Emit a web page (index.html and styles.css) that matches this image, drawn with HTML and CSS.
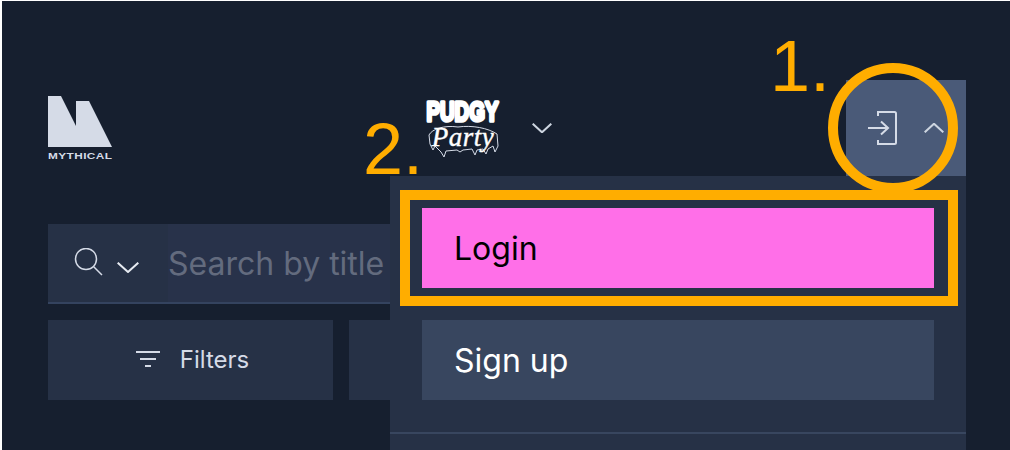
FILE: index.html
```html
<!DOCTYPE html>
<html lang="en">
<head>
    <meta charset="UTF-8">
    <meta name="viewport" content="width=device-width, initial-scale=1.0">
    <title>Mythical</title>
    <link rel="stylesheet" href="styles.css">
</head>
<body>
    <div class="page">
        <header class="header">
            <div class="logo">
                <svg width="64" height="51" viewBox="0 0 64 51"><path d="M0 0H13L28 30V5H41L64 51H0Z" fill="#d5dbe7"/></svg>
                <span class="logo-name">MYTHICAL</span>
            </div>
            <div class="game-picker">
                <svg class="pudgy" width="80" height="62" viewBox="0 0 80 62">
                    <text x="42.500" y="24" class="pudgy-title" text-anchor="middle" textLength="72" lengthAdjust="spacingAndGlyphs">PUDGY</text>
                    <path d="M9 38C12 32 24 28 38 30C52 28 68 31 77 37L78 49L75 55L73 49L68 52L66 57L63 52L57 53L55 58L52 52L43 53L40 55L37 53L26 54L24 60L21 55L15 49L13 53L10 47Z" class="pudgy-drip"/>
                    <text x="43" y="49" class="pudgy-sub" text-anchor="middle">Party</text>
                </svg>
                <svg class="chevron" width="20" height="10" viewBox="0 0 20 10"><path d="M.7 .7L10 9.300L19.300 .7" fill="none" stroke="#cdd5e0" stroke-width="2"/></svg>
            </div>
            <div class="account">
                <button class="account-btn">
                    <svg width="30" height="34" viewBox="0 0 30 34" fill="none" stroke="#d5dbe7" stroke-width="2"><path d="M10 5V1H26.500Q28 1 28 2.500V31.500Q28 33 26.500 33H10V29"/><path d="M0 17H20M13 10.500L20 17L13 23.500"/></svg>
                    <svg width="20" height="10" viewBox="0 0 20 10"><path d="M.7 9.300L10 .7L19.300 9.300" fill="none" stroke="#cdd5e0" stroke-width="2"/></svg>
                </button>
                <div class="account-menu">
                    <a class="menu-item menu-item-active">Login</a>
                    <a class="menu-item">Sign up</a>
                    <div class="menu-divider"></div>
                </div>
            </div>
        </header>

        <div class="search">
            <div class="search-type">
                <svg width="30" height="30" viewBox="0 0 30 30" fill="none" stroke="#d5dbe7" stroke-width="1.500"><circle cx="12" cy="11" r="10.500"/><path d="M19.500 18.500L28 27"/></svg>
                <svg width="22" height="11" viewBox="0 0 22 11"><path d="M.7 .7L11 10L21.300 .7" fill="none" stroke="#e6eaf1" stroke-width="2"/></svg>
            </div>
            <span class="search-text">Search by title</span>
        </div>

        <div class="toolbar">
            <button class="tool-btn">
                <svg width="24" height="16" viewBox="0 0 24 16" fill="none" stroke="#d5dbe7" stroke-width="2"><path d="M0 1H24M4 8H20M9 15H15"/></svg>
                Filters
            </button>
            <button class="tool-btn"></button>
        </div>
    </div>

    <!-- annotations on top of the screenshot -->
    <span class="note note-one">1.</span>
    <span class="note note-two">2.</span>
    <div class="ring"></div>
    <div class="frame"></div>
</body>
</html>
```

FILE: styles.css
```css
* {
    box-sizing: border-box;
    font-family: Inter, "Liberation Sans", sans-serif;
}

html, body {
    margin: 0;
    height: 100%;
}

body {
    position: relative;
    width: 1010px;
    height: 450px;
    overflow: hidden;
    background-color: #161f2f;
}

/* white edge of the screenshot */
body::after {
    content: "";
    position: absolute;
    top: 0;
    left: 0;
    width: 100%;
    height: 100%;
    border: solid #fff;
    border-width: 1px 2px 0;
}

.page {
    padding: 80px 44px 0 48px;
}

.header {
    display: flex;
    align-items: center;
    height: 96px;
}

.logo {
    display: flex;
    flex-direction: column;
    width: 64px;
    height: 64px;
}

.logo-name {
    margin-top: 6px;
    font-family: "Liberation Sans", sans-serif;
    font-size: 8.500px;
    font-weight: 700;
    line-height: 7px;
    letter-spacing: .3px;
    color: #d5dbe7;
    white-space: nowrap;
    transform: scaleX(1.39);
    transform-origin: left;
}

.game-picker {
    display: flex;
    align-items: center;
    margin-left: 308px;
}

.pudgy {
    overflow: visible;
}

.chevron {
    margin-left: 32px;
    margin-top: -1px;
}

.pudgy-title {
    font-family: "Liberation Sans", sans-serif;
    font-size: 28px;
    font-weight: 700;
    fill: #fff;
    stroke: #fff;
    stroke-width: 3.500px;
    stroke-linejoin: round;
}

.pudgy-sub {
    font-family: "Liberation Serif", serif;
    font-size: 27px;
    font-style: italic;
    letter-spacing: .5px;
    fill: #fff;
    stroke: #fff;
    stroke-width: .4px;
}

.pudgy-drip {
    fill: #161f2f;
    stroke: #d5dbe7;
    stroke-width: 1px;
}

.account {
    position: relative;
    margin-left: auto;
}

.account-btn {
    display: flex;
    align-items: center;
    justify-content: center;
    gap: 26px;
    width: 120px;
    height: 96px;
    padding: 0;
    border: none;
    background-color: #4a5a78;
}

.account-menu {
    position: absolute;
    top: 100%;
    right: 0;
    display: flex;
    flex-direction: column;
    gap: 32px;
    width: 576px;
    padding: 32px 0 16px;
    background-color: #263146;
}

.menu-item {
    display: flex;
    align-items: center;
    height: 80px;
    margin: 0 32px;
    padding-left: 32px;
    font-size: 32px;
    color: #fff;
    background-color: #38465f;
}

.menu-item-active {
    color: #000;
    background-color: #ff6fe8;
}

.menu-divider {
    height: 2px;
    background-color: #38465f;
}

.search {
    display: flex;
    align-items: center;
    height: 80px;
    margin-top: 48px;
    border-bottom: 2px solid #34435f;
    background-color: #28324a;
}

.search-type {
    display: flex;
    align-items: center;
    gap: 13px;
    width: 120px;
    height: 100%;
    padding-left: 26px;
    background-color: #263146;
}

.search-type svg + svg {
    margin-top: 9px;
}

.search-text {
    font-size: 32px;
    color: #636b7e;
}

.toolbar {
    display: flex;
    gap: 16px;
    margin-top: 16px;
}

.tool-btn {
    display: flex;
    align-items: center;
    justify-content: center;
    gap: 20px;
    width: 285px;
    height: 80px;
    padding: 0 0 2px 4px;
    border: none;
    font-size: 24px;
    font-weight: 400;
    color: #d5dbe7;
    background-color: #263146;
}

.note {
    position: absolute;
    font-family: "Liberation Sans", sans-serif;
    font-size: 72px;
    line-height: 72px;
    color: #ffad00;
}

.note-one {
    left: 770px;
    top: 30px;
}

.note-two {
    left: 363px;
    top: 113px;
}

.ring {
    position: absolute;
    left: 828px;
    top: 63px;
    width: 130px;
    height: 130px;
    border: 10px solid #ffad00;
    border-radius: 50%;
}

.frame {
    position: absolute;
    left: 400px;
    top: 190px;
    width: 558px;
    height: 116px;
    border: 10px solid #ffad00;
}
```
